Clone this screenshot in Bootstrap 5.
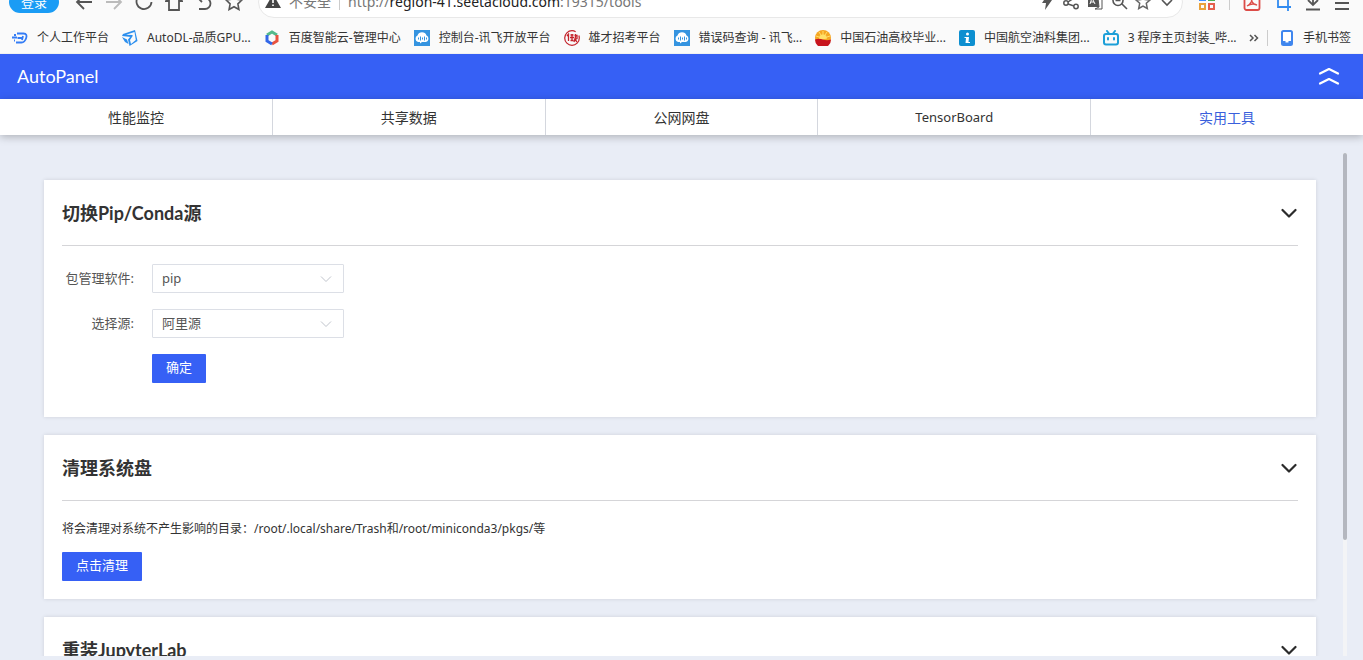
<!DOCTYPE html>
<html lang="zh-CN">
<head>
<meta charset="utf-8">
<meta name="viewport" content="width=device-width, initial-scale=1">
<title>AutoPanel</title>
<link rel="stylesheet" href="https://cdn.jsdelivr.net/npm/bootstrap@5.3.0/dist/css/bootstrap.min.css">
<style>
:root { --brand: #3660f5; --ink: #333; }
body { font-family: "Noto Sans", "Noto Sans CJK SC", sans-serif; font-size: 13px; line-height: 20px; color: var(--ink); background: #e9edf6; }
a { color: inherit; text-decoration: none; }
svg { display: block; flex: none; }
.plain { border: 0; padding: 0; background: none; color: inherit; }
/* browser frame */
.browser { background: #fafafa; border-bottom: 1px solid #f1f1f1; }
.toolbar { height: 32px; margin-top: -14px; padding: 0 13px 0 9px; color: #555; }
.login { width: 50px; height: 22px; border: 0; padding: 0; border-radius: 11px; background: #1a9cf5; color: #fff; font-size: 13px; }
.nav-tools { gap: 12px; margin-left: 16px; }
.address { height: 32px; margin-left: 15px; padding: 0 6px 0 6px; background: #fff; border: 1px solid #e8e8e8; border-radius: 16px; font-size: 14px; color: #777; }
.address b { font-weight: 400; color: #222; }
.address-tools { gap: 6px; }
.ext-tools { margin-left: 15px; gap: 13px; }
.rule { width: 1px; height: 16px; background: #ccc; }
.bookmarks { height: 35px; padding: 4px 12px 0; font-size: 12px; }
.bookmarks ul { gap: 13px; }
.bookmarks a { display: flex; align-items: center; gap: 9px; white-space: nowrap; }
/* panel */
.topbar { height: 45px; background: var(--brand); color: #fff; padding: 0 23px 2px 17px; font-family: Lato, "Noto Sans", sans-serif; font-size: 18px; }
.tabs { background: #fff; box-shadow: 0 2px 8px rgba(0,0,0,.25); position: relative; }
.tabs a { flex: 1 1 0; text-align: center; line-height: 35px; padding-top: 1px; font-size: 14px; border-left: 1px solid #d4d7de; }
.tabs a:first-child { border-left: 0; }
.tabs a.active { color: #3a5fdc; }
.tabs [lang="en"] { font-size: 13px; }
.stage { padding: 18px 16px 4px 0; min-height: 0; }
.panels { padding: 27px 27px 0 44px; gap: 18px; overflow: hidden; }
.panel { background: #fff; padding: 0 18px 18px; box-shadow: 0 0 4px rgba(0,0,0,.12); flex: none; }
.panel header { height: 66px; border-bottom: 1px solid #d5d5d8; margin-bottom: 18px; padding-right: 1px; }
.panel h2 { font-family: Lato, "Noto Sans CJK SC", sans-serif; font-size: 18px; line-height: 26px; font-weight: 700; margin: 0; }
.note { font-size: 12px; margin-bottom: 13px; }
.fields { display: grid; grid-template-columns: 72px 192px; gap: 16px 18px; padding-bottom: 16px; }
.fields label { text-align: right; line-height: 28px; color: #555; }
.fields select { height: 29px; padding: 0 28px 2px 9px; border-color: #dcdfe6; border-radius: 1px; font-size: 13px; line-height: 20px; color: #555;
  background-image: url("data:image/svg+xml,%3Csvg xmlns='http://www.w3.org/2000/svg' viewBox='0 0 12 12'%3E%3Cpath d='M1 3.5l5 5 5-5' fill='none' stroke='%23c0c4cc'/%3E%3C/svg%3E"); background-size: 12px; background-position: right 11px center; }
.act { height: 29px; padding: 0 14px 3px; border: 0; border-radius: 1px; background: var(--brand); color: #fff; font-size: 13px; line-height: 20px; justify-self: start; }
.rail { width: 4px; background: #f3f4f6; flex: none; }
.rail div { height: 77%; border-radius: 2px; background: #b4b7bf; }
</style>
</head>
<body class="vh-100 overflow-hidden d-flex flex-column">

<svg width="0" height="0" class="position-absolute" aria-hidden="true">
  <symbol id="chev" viewBox="0 0 16 16"><path d="M1.500 5l6.500 6.500L14.500 5" fill="none" stroke="#2b2b2b" stroke-width="2.200" stroke-linecap="round" stroke-linejoin="round"/></symbol>
  <symbol id="cloud" viewBox="0 0 16 16"><path fill="#3594e0" d="M0 0h16v16H0z"/><path fill="#fff" d="M4 12a3.500 3.500 0 0 1-.5-6.500 4.800 4.800 0 0 1 9 0A3.500 3.500 0 0 1 12 12H8l-2 1.500V12z"/><path stroke="#3594e0" d="M4.500 7.500v2M6.500 6.500v4M8.500 7.500v2M10.500 6.500v4M12.500 7.500v2"/></symbol>
</svg>

<div class="browser flex-shrink-0">
  <div class="toolbar d-flex align-items-center">
    <button class="login">登录</button>
    <div class="nav-tools d-flex">
      <button class="plain" aria-label="后退"><svg width="18" height="18" viewBox="0 0 18 18" fill="none" stroke="#555" stroke-width="1.800"><path d="M17 9H2M9 2L2 9l7 7"/></svg></button>
      <button class="plain" aria-label="前进"><svg width="18" height="18" viewBox="0 0 18 18" fill="none" stroke="#bbb" stroke-width="1.800"><path d="M1 9h15M9 2l7 7-7 7"/></svg></button>
      <button class="plain" aria-label="刷新"><svg width="18" height="18" viewBox="0 0 18 18" fill="none" stroke="#555" stroke-width="1.800"><path d="M15 4a7.500 7.500 0 1 0 1.500 5M15.500 0v5h-5"/></svg></button>
      <button class="plain" aria-label="主页"><svg width="18" height="18" viewBox="0 0 18 18" fill="none" stroke="#555" stroke-width="1.800"><path d="M4 8v9h10V8h3L9 1 1 8z"/></svg></button>
      <button class="plain" aria-label="恢复"><svg width="18" height="18" viewBox="0 0 18 18" fill="none" stroke="#555" stroke-width="1.800"><path d="M7 1L3 5l4 4M3 5h7a5 5 0 0 1 0 11H4"/></svg></button>
      <button class="plain" aria-label="收藏"><svg width="18" height="18" viewBox="0 0 18 18" fill="none" stroke="#555" stroke-width="1.600"><path d="M9 1l2.400 5.200 5.600.7-4.100 3.900 1 5.700L9 13.700l-4.900 2.800 1-5.700L1 6.900l5.600-.7z"/></svg></button>
    </div>
    <div class="address d-flex align-items-center flex-grow-1">
      <svg width="16" height="16" viewBox="0 0 16 16"><path fill="#444" d="M8 0l8 14H0z"/><path stroke="#fff" stroke-width="1.600" d="M8 5v4M8 10.500V12"/></svg>
      <span class="ms-2">不安全</span><span class="rule mx-2"></span>
      <span class="flex-grow-1">http://<b>region-41.seetacloud.com</b>:19315/tools</span>
      <div class="address-tools d-flex">
        <svg width="18" height="16" viewBox="0 0 18 16"><path fill="#555" d="M10 0L4 9h4l-1 7 7-10H9.500z"/></svg>
        <svg width="18" height="16" viewBox="0 0 18 16" fill="none" stroke="#555" stroke-width="1.500"><circle cx="4" cy="9" r="2.200"/><circle cx="14" cy="3" r="2.200"/><circle cx="14" cy="12.500" r="2.200"/><path d="M6 8l6-4M6 10l6 2"/></svg>
        <svg width="18" height="16" viewBox="0 0 18 16"><path fill="#555" d="M2 0h9l3 13H2z"/><path fill="#fff" stroke="#555" d="M12 4h4v11H9l4-2z"/><path stroke="#fff" fill="none" d="M4 10l2-6 3 6M5 8h3"/></svg>
        <svg width="18" height="16" viewBox="0 0 18 16" fill="none" stroke="#555" stroke-width="1.600"><circle cx="8" cy="6.500" r="5"/><path d="M12 10l5 5M5.500 6.500h5"/></svg>
        <svg width="18" height="16" viewBox="0 0 18 16" fill="none" stroke="#666" stroke-width="1.500"><path d="M9 1l2 4.500 5 .5-3.700 3.300 1 5.200L9 12l-4.300 2.500 1-5.200L2 6l5-.5z"/></svg>
        <svg width="18" height="16" viewBox="0 0 18 16" fill="none" stroke="#555" stroke-width="1.600"><path d="M4 6l5 5 5-5"/></svg>
      </div>
    </div>
    <div class="ext-tools d-flex align-items-center">
      <svg width="18" height="18" viewBox="0 0 18 18" fill="none" stroke-width="2"><path stroke="#3f8cff" d="M2 1h5v6H2z"/><path stroke="#4caf50" d="M11 1h5v6h-5z"/><path stroke="#e9a23b" d="M2 11h5v5H2z"/><path stroke="#e5604d" d="M11 11h5v5h-5z"/></svg>
      <span class="rule"></span>
      <svg width="18" height="18" viewBox="0 0 18 18" fill="none" stroke="#dc4c48" stroke-width="1.800"><rect x="1.500" y="1" width="15" height="16" rx="2"/><path d="M4 13c4-2 6-6 4.500-9-1 4 2 8 5.500 8-3-1.500-7-1-10 1z" stroke-width="1.300"/></svg>
      <svg width="18" height="18" viewBox="0 0 18 18" fill="none" stroke="#318bf0" stroke-width="1.800"><path d="M4 1v13h13M1 4h13v14"/></svg>
      <svg width="16" height="18" viewBox="0 0 16 18" fill="none" stroke="#555" stroke-width="1.800"><path d="M8 0v12M3 7l5 5 5-5M1 16.500h14"/></svg>
      <svg width="16" height="18" viewBox="0 0 16 18" fill="none" stroke="#555" stroke-width="1.800"><path d="M1 4h14M1 10h14M1 16h14"/></svg>
    </div>
  </div>

  <nav class="bookmarks d-flex align-items-center justify-content-between" aria-label="书签">
    <ul class="list-unstyled d-flex mb-0">
      <li><a href="#"><svg width="16" height="16" viewBox="0 0 16 16" fill="none" stroke="#347df5" stroke-width="1.800"><path d="M5 3.500h6.500c3 0 3.500 2 2.700 4.500s-2 4.500-4.700 4.500H4M0 7.500h5M2 5h2M2 10.500h1M11 6l-1 4M5.500 8H11"/></svg>个人工作平台</a></li>
      <li><a href="#"><svg width="16" height="16" viewBox="0 0 16 16"><path fill="#2c8fee" d="M13 0L1 4l-1 2 9 1 1.500-2L4 4.800 12.500 2l1.300 8L9 14l-1-4 3-4.500-1.500-.2L6 9.500 7.500 16l8-5zM0 7l3 5 3.500 2L5 9.500z"/></svg>AutoDL-品质GPU...</a></li>
      <li><a href="#"><svg width="16" height="16" viewBox="0 0 16 16" fill="none" stroke-width="3"><path stroke="#55b98b" d="M3 5l5-3 5 3"/><path stroke="#e9523e" d="M13 5v6l-5 3"/><path stroke="#3267e8" d="M8 14l-5-3V5"/></svg>百度智能云-管理中心</a></li>
      <li><a href="#"><svg width="16" height="16"><use href="#cloud"/></svg>控制台-讯飞开放平台</a></li>
      <li><a href="#"><svg width="16" height="16" viewBox="0 0 16 16" fill="none" stroke="#c4232b"><circle cx="8" cy="8" r="7.300" stroke-width="1.200" stroke-dasharray="38 5"/><path stroke-width="1.300" d="M5 3.500L3 6M4.500 5v6M6.500 5h3M8 4v6M6 7.500h4M6.500 10.500h3M11.500 4v3l-1.500 5M10.500 5.500H13v3l-2 1 2 2.500"/></svg>雄才招考平台</a></li>
      <li><a href="#"><svg width="16" height="16"><use href="#cloud"/></svg>错误码查询 - 讯飞...</a></li>
      <li><a href="#"><svg width="16" height="16" viewBox="0 0 16 16"><circle cx="8" cy="8" r="8" fill="#f5a623"/><path fill="#c7141d" d="M0 9.500Q4 8 8 9.500t8 0A8 8 0 0 1 0 9.500"/><path fill="#ffe06a" d="M4 8.500a4 4 0 0 1 8 0q-4 1.500-8 0"/><path stroke="#ffe06a" d="M8 1v4M4 2l2 3M12 2l-2 3M1 6l3 1M15 6l-3 1"/></svg>中国石油高校毕业...</a></li>
      <li><a href="#"><svg width="16" height="16" viewBox="0 0 16 16"><rect width="16" height="16" rx="2" fill="#0d8fd0"/><circle cx="8.500" cy="4" r="1.500" fill="#fff"/><path fill="#fff" d="M5.500 7H10l-.5 5H11v1H6.500L7 8H5.500z"/></svg>中国航空油料集团...</a></li>
      <li><a href="#"><svg width="16" height="16" viewBox="0 0 16 16" fill="none" stroke="#1c9fd8" stroke-width="2" stroke-linecap="round"><rect x="1" y="4" width="14" height="10.500" rx="2"/><path d="M4 1l2 2.500M12 1l-2 2.500M5 8v1.500M11 8v1.500"/></svg>3 程序主页封装_哔...</a></li>
    </ul>
    <div class="d-flex align-items-center flex-shrink-0">
      <button class="plain" aria-label="更多书签"><svg width="10" height="8" viewBox="0 0 10 8" fill="none" stroke="#555" stroke-width="1.500"><path d="M1 1l3 3-3 3M5.500 1l3 3-3 3"/></svg></button>
      <span class="rule ms-2 me-2"></span>
      <a href="#" class="ms-1"><svg width="14" height="16" viewBox="0 0 14 16"><rect x="2" y="1" width="10" height="14" rx="1.500" fill="#fff" stroke="#3f86ee" stroke-width="2"/><path fill="#3f86ee" d="M2 11h3.500v1.500h3V11H12v4H2z"/></svg>手机书签</a>
    </div>
  </nav>
</div>

<header class="topbar d-flex align-items-center justify-content-between flex-shrink-0">
  <span>AutoPanel</span>
  <button class="plain" aria-label="收起"><svg width="22" height="20" viewBox="0 0 22 20" fill="none" stroke="#fff" stroke-width="2.200" stroke-linecap="round" stroke-linejoin="round"><path d="M2 7.500L11 3l9 4.500M2 17.500L11 13l9 4.500"/></svg></button>
</header>
<nav class="tabs d-flex flex-shrink-0">
  <a href="#">性能监控</a><a href="#">共享数据</a><a href="#">公网网盘</a><a href="#" lang="en">TensorBoard</a><a href="#" class="active" aria-current="page">实用工具</a>
</nav>

<main class="stage d-flex flex-grow-1">
  <div class="panels d-flex flex-column flex-grow-1">
    <section class="panel">
      <header class="d-flex align-items-center justify-content-between"><h2>切换Pip/Conda源</h2><button class="plain" aria-label="折叠"><svg width="16" height="16"><use href="#chev"/></svg></button></header>
      <form class="fields">
        <label for="manager">包管理软件:</label>
        <select id="manager" class="form-select"><option>pip</option><option>conda</option></select>
        <label for="source">选择源:</label>
        <select id="source" class="form-select"><option>阿里源</option></select>
        <span></span><button type="button" class="act">确定</button>
      </form>
    </section>
    <section class="panel">
      <header class="d-flex align-items-center justify-content-between"><h2>清理系统盘</h2><button class="plain" aria-label="折叠"><svg width="16" height="16"><use href="#chev"/></svg></button></header>
      <p class="note">将会清理对系统不产生影响的目录：/root/.local/share/Trash和/root/miniconda3/pkgs/等</p>
      <button class="act">点击清理</button>
    </section>
    <section class="panel">
      <header class="d-flex align-items-center justify-content-between"><h2>重装JupyterLab</h2><button class="plain" aria-label="折叠"><svg width="16" height="16"><use href="#chev"/></svg></button></header>
    </section>
  </div>
  <div class="rail"><div></div></div>
</main>
<script src="https://cdn.jsdelivr.net/npm/bootstrap@5.3.0/dist/js/bootstrap.bundle.min.js"></script>
</body>
</html>
